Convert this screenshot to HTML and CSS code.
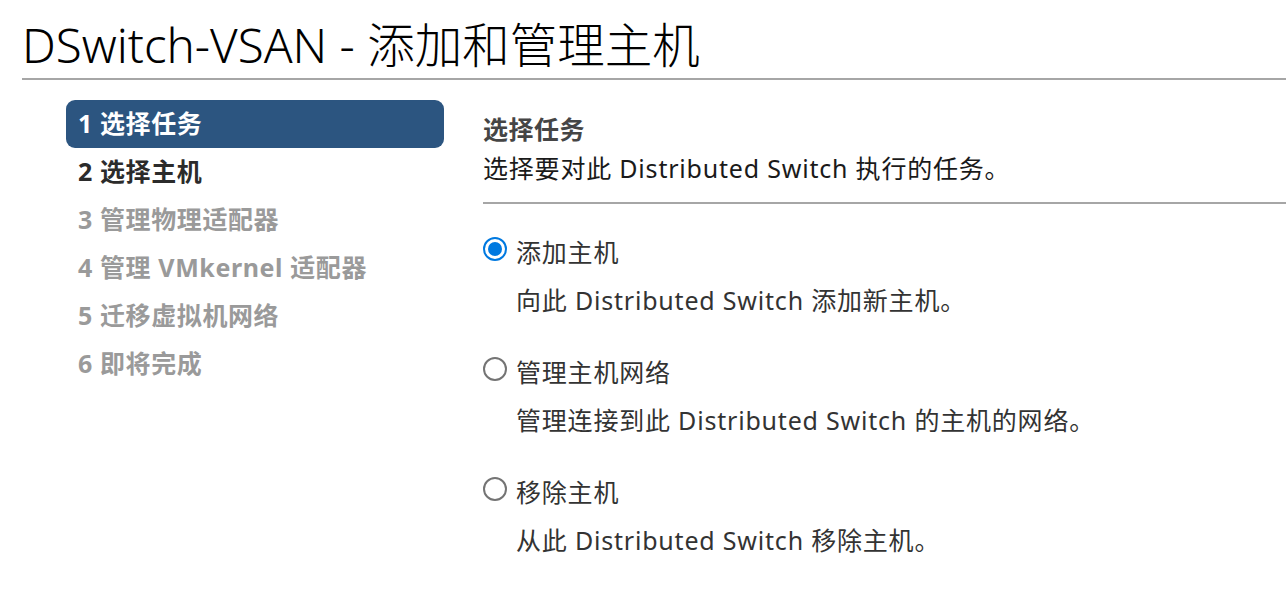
FILE: index.html
```html
<!DOCTYPE html>
<html lang="zh-CN">
<head>
<meta charset="utf-8">
<title>DSwitch-VSAN - 添加和管理主机</title>
<link rel="stylesheet" href="styles.css">
</head>
<body>
<header class="title-bar">
  <h1 class="title">DSwitch-VSAN - 添加和管理主机</h1>
</header>
<div class="wizard">
  <nav class="steps">
    <div class="step active">1 选择任务</div>
    <div class="step current">2 选择主机</div>
    <div class="step disabled">3 管理物理适配器</div>
    <div class="step disabled">4 管理 VMkernel 适配器</div>
    <div class="step disabled">5 迁移虚拟机网络</div>
    <div class="step disabled">6 即将完成</div>
  </nav>
  <main class="content">
    <div class="content-head">
      <h2 class="heading">选择任务</h2>
      <p class="subtitle">选择要对此 Distributed Switch 执行的任务。</p>
    </div>
    <div class="options">
      <label class="option">
        <span class="option-row"><span class="radio checked"></span><span class="option-label">添加主机</span></span>
        <span class="option-desc">向此 Distributed Switch 添加新主机。</span>
      </label>
      <label class="option">
        <span class="option-row"><span class="radio"></span><span class="option-label">管理主机网络</span></span>
        <span class="option-desc">管理连接到此 Distributed Switch 的主机的网络。</span>
      </label>
      <label class="option">
        <span class="option-row"><span class="radio"></span><span class="option-label">移除主机</span></span>
        <span class="option-desc">从此 Distributed Switch 移除主机。</span>
      </label>
    </div>
  </main>
</div>
</body>
</html>
```

FILE: styles.css
```css
html, body {
  margin: 0;
  padding: 0;
  background: #ffffff;
}
body {
  font-family: "Noto Sans", "Noto Sans CJK SC", sans-serif;
  color: #333333;
  width: 1286px;
  height: 606px;
  overflow: hidden;
}
.title-bar {
  margin-left: 22px;
  padding-top: 17px;
  padding-bottom: 5px;
  border-bottom: 2px solid #a6a6a6;
}
.title {
  margin: 0;
  font-size: 47.5px;
  line-height: 56px;
  font-weight: 300;
  color: #000000;
  white-space: nowrap;
}
.wizard {
  display: flex;
  padding-top: 20px;
  padding-left: 66px;
  gap: 39px;
}
.steps {
  width: 378px;
  flex: none;
  display: flex;
  flex-direction: column;
}
.step {
  height: 48px;
  line-height: 47px;
  padding-left: 12px;
  font-size: 25px;
  font-weight: 700;
  letter-spacing: 0.6px;
  border-radius: 9px;
  white-space: nowrap;
}
.step.active {
  background: #2c5580;
  color: #ffffff;
}
.step.current {
  color: #2b2b2b;
}
.step.disabled {
  color: #9a9a9a;
}
.content {
  flex: 1;
}
.content-head {
  padding-top: 10px;
  padding-bottom: 14px;
  border-bottom: 2px solid #a6a6a6;
}
.heading {
  margin: 0;
  font-size: 25px;
  line-height: 38px;
  font-weight: 700;
  letter-spacing: 0.5px;
  color: #454545;
}
.subtitle {
  margin: 0;
  font-size: 25px;
  line-height: 40px;
  letter-spacing: 0.8px;
  color: #1a1a1a;
}
.options {
  padding-top: 23px;
  display: flex;
  flex-direction: column;
  gap: 23px;
}
.option {
  display: flex;
  flex-direction: column;
  font-size: 25px;
  letter-spacing: 0.8px;
  color: #333333;
}
.option-row {
  display: flex;
  align-items: center;
  height: 48px;
  gap: 9px;
}
.radio {
  width: 20px;
  height: 20px;
  margin-bottom: 4px;
  border: 2px solid #747474;
  border-radius: 50%;
  box-sizing: content-box;
  flex: none;
  position: relative;
}
.radio.checked {
  border-color: #0079e0;
}
.radio.checked::after {
  content: "";
  position: absolute;
  left: 3px;
  top: 3px;
  width: 14px;
  height: 14px;
  border-radius: 50%;
  background: #0079e0;
}
.option-desc {
  display: block;
  height: 48px;
  line-height: 48px;
  padding-top: 1px;
  padding-left: 33px;
  white-space: nowrap;
}
```
